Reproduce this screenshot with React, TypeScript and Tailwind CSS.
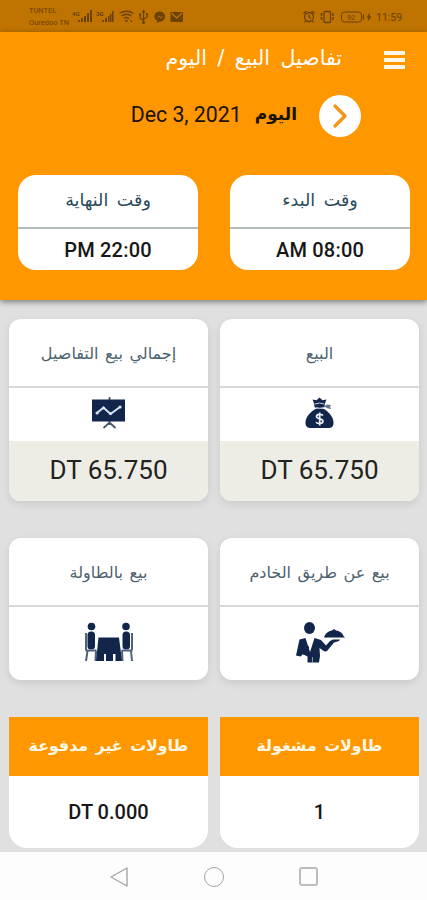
import React from 'react';
import { ChevronRight } from 'lucide-react';

const ARABIC = "font-['DejaVu_Sans',sans-serif]";

function StatusBar() {
  return (
    <div className="flex h-8 shrink-0 items-center bg-[#bf7300] pl-[29px] pr-[25px] text-[#6b4104]">
      <div className="w-[43px] whitespace-nowrap pt-[2px] text-[7.5px] leading-[12.500px]">
        <div>TUNTEL</div>
        <div>Ouredoo TN</div>
      </div>
      <svg width="112" height="16" viewBox="72 8 112 16" fill="currentColor">
        <text x="72" y="16" fontSize="6" fontWeight="700">4G</text>
        <path d="M78 20h2v2h-2zM81 18h2v4h-2zM84 16h2v6h-2zM87 13h2v9h-2zM90 10h2v12h-2z" />
        <text x="96" y="16" fontSize="6" fontWeight="700">3G</text>
        <path d="M102 20h2v2h-2zM105 18h2v4h-2zM108 16h1.5v6h-1.5zM110 14h1.5v8h-1.5zM112 11h1.5v11h-1.5z" />
        <g fill="none" stroke="currentColor" strokeWidth="1.3">
          <path d="M119.5 13.5q7-4.500 14 0M121.500 16q5-3.500 10 0M124 18.500q2.500-2 5 0" />
          <path d="M143.500 11v12M140 15v3l3.500 2.500M147 14v3l-3.500 2.500" />
        </g>
        <circle cx="126.500" cy="21" r="1.200" />
        <path d="M129 19l2 3h2M143.500 9.500l2 3h-4zM139 13.500h2v2h-2zM146 13h2v2h-2z" />
        <circle cx="143.500" cy="22.500" r="1.500" />
        <path d="M160 11.500a5.500 5 0 0 0-3 9.300V23l2-1.300A5.500 5 0 1 0 160 11.500z" />
        <path d="M156.500 18.500l2.700-3 1.700 1.700 2.700-1.700-2.700 3-1.700-1.700z" fill="#bf7300" />
        <rect x="170.500" y="12" width="12.500" height="10" rx="1" />
        <path d="M171.500 13l5.200 5 5.200-5" fill="none" stroke="#bf7300" strokeWidth="1.300" />
      </svg>
      <svg className="ml-auto" width="72" height="16" viewBox="302 8 72 16" fill="none" stroke="currentColor" strokeWidth="1.300">
        <circle cx="309" cy="17" r="4.500" />
        <path d="M309 14.500V17l2 1.500M303.500 13.500l3-2.500M314.500 13.500l-3-2.500M305.500 21l-1 1.500M312.500 21l1 1.500" />
        <rect x="324" y="11.500" width="6.500" height="11" rx="1" />
        <path d="M321.500 13v8M333 13v8" strokeWidth="1.500" strokeDasharray="3 1" />
        <rect x="341.500" y="12" width="20" height="10" rx="3" strokeWidth="1" />
        <path d="M363.500 14.500v5" />
        <path d="M370 12.500l-3.500 5h2l-1 4 4-5h-2z" fill="currentColor" stroke="none" />
        <text x="347" y="19.500" fontSize="7" fill="currentColor" stroke="none">92</text>
      </svg>
      <span className="ml-[2px] w-[26px] whitespace-nowrap pt-[3px] text-[10.500px]">11:59</span>
    </div>
  );
}

function TimeCard({ label, value }: { label: string; value: string }) {
  return (
    <div className="h-[95px] w-[180px] overflow-hidden rounded-[18px] bg-white text-center">
      <div
        dir="rtl"
        className={`${ARABIC} h-[54px] border-b-2 border-[#b3bbbb] text-[17.500px] leading-[50px] text-[#294a5c] [word-spacing:3px]`}
      >
        {label}
      </div>
      <div className="text-[20px] font-medium leading-[42px] tracking-[0.2px] text-[#171717]">{value}</div>
    </div>
  );
}

interface SaleCardProps {
  label: string;
  icon: React.ReactNode;
  value?: string;
}

function SaleCard({ label, icon, value }: SaleCardProps) {
  return (
    <div className="flex flex-col overflow-hidden rounded-xl bg-white text-center shadow-[0_3px_8px_rgba(0,0,0,0.1)]">
      <div
        dir="rtl"
        className={`${ARABIC} h-[69px] shrink-0 border-b-2 border-[#d8d8d8] text-[16px] leading-[70px] text-[#4b626e] [word-spacing:1.500px]`}
      >
        {label}
      </div>
      <div className="flex min-h-0 flex-1 items-center justify-center pb-1">{icon}</div>
      {value && (
        <div className="h-[60px] bg-[#eeede5] text-[26px] leading-[59px] text-[#222220]">{value}</div>
      )}
    </div>
  );
}

function TableCard({ label, value }: { label: string; value: string }) {
  return (
    <div className="overflow-hidden rounded-b-[18px] bg-white text-center">
      <div
        dir="rtl"
        className={`${ARABIC} h-[59px] bg-[#ff9800] text-[15.800px] font-bold leading-[57px] text-[#fff8e6] [word-spacing:2px]`}
      >
        {label}
      </div>
      <div className="text-[20px] font-medium leading-[72px] text-[#171717]">{value}</div>
    </div>
  );
}

const BoardIcon = () => (
  <svg width="34" height="34" viewBox="0 0 34 34" fill="none">
    <path d="M17.500 1v3M17.500 25v4M17.500 26.500l-6 5.500M17.500 26.500l6 5.500" stroke="#48576a" strokeWidth="1.800" />
    <path d="M0 3.500h33v22H0z" fill="#12264c" />
    <path d="M5 17l6.500-5.500L18.500 18 28 11" stroke="#d9e4f2" strokeWidth="2" />
    <path d="M5 17h.1M11.500 12h.1M18.500 17.500h.1M28 11h.1" stroke="#d9e4f2" strokeWidth="3" strokeLinecap="round" />
  </svg>
);

const MoneyBagIcon = () => (
  <svg width="30" height="32" viewBox="0 0 30 32" fill="#12264c">
    <path d="M7.500 2.500l4 .7L14.500.5l3 2.700 4-.7-2 5h-10z" />
    <path d="M9 7.500c3-1.500 8-1.500 11 0l-1 3.500c-3 1-6 1-9 0z" />
    <path d="M10 7q4.500-2 9 0M10.500 10.500q4.500 1.500 8.500 0" fill="none" stroke="#fff" strokeWidth=".8" />
    <path d="M19 9.500l3-2 4 .5-1 2 1.500 2-3.500-.5z" fill="#687792" />
    <path d="M10.500 12h8.500c4 2.500 9 7 9.500 13 .3 4-1.500 6-5.500 6H6c-4 0-5.700-2-5.500-6C1 19 6 14.500 10.500 12z" />
    <path d="M18 18.500c-1-1.500-6.500-2-6.500 1s6.500 1.700 6.500 4.700-6 2.800-7 1M14.700 15.500v13" fill="none" stroke="#e9eef5" strokeWidth="1.700" />
  </svg>
);

const WaiterIcon = () => (
  <svg width="50" height="42" viewBox="0 0 50 42" fill="#12264c">
    <ellipse cx="14.500" cy="7" rx="5.500" ry="6" />
    <path d="M29.500 15c1.500-3.500 4.500-5 7.500-5.500l2-1.500 2 1.500c3.500.5 6.500 2 7.500 5.500l1.500 1.500H29z" />
    <path d="M4.500 18.500l6-1.500L15 31l4.500-14 6.500 2 5 5.500 4-4.500 3-1.500h7L44 20l-5 1.500-6.500 8c-1.200 1.200-3 1.200-4.500 0l-3.500-2.500.5 8-1 6.500H12.500v-6L8 33l-2.500 2.500-4.500-1z" />
    <path d="M6 29l8-4v10l-6-1.500z" />
    <path d="M12.500 17.500l3 10.500 2.500-10.500" fill="#fff" />
    <path d="M17.500 36v5.500" stroke="#fff" strokeWidth=".5" />
  </svg>
);

const TableIcon = () => (
  <svg width="50" height="40" viewBox="0 0 50 40" fill="#12264c">
    <circle cx="7.500" cy="4.500" r="3.800" />
    <circle cx="42" cy="4.500" r="3.800" />
    <rect x="3.500" y="9.500" width="7.500" height="18" rx="3.500" />
    <rect x="38.500" y="9.500" width="7.500" height="18" rx="3.500" />
    <path d="M2 11v17M1.500 28.500h11M3.500 29l-1.500 10M12 29l-.5 10M48 11v17M37.500 28.500h11M47 29l1 10M38 29l.5 10" stroke="#50637a" strokeWidth="2" />
    <path d="M14.500 15.500h20.500L38 39h-6.500v-7h-2.500v7h-7v-7h-2v7H12z" />
  </svg>
);

function NavBar() {
  return (
    <div className="flex h-12 shrink-0 items-center justify-center gap-[75px] bg-[#fdfdfd] pt-px">
      <svg width="20" height="22" viewBox="0 0 20 22" fill="none" stroke="#a5a5a5" strokeWidth="1.400">
        <path d="M18 2v18L2 11z" strokeLinejoin="round" />
      </svg>
      <div className="h-5 w-5 rounded-full border-[1.5px] border-[#a5a5a5]" />
      <div className="h-[19px] w-[19px] rounded-[3px] border-2 border-[#bdbdbd]" />
    </div>
  );
}

export default function App() {
  return (
    <div className="flex h-[900px] w-[427px] flex-col overflow-hidden bg-[#e0e0e0] font-[Roboto,sans-serif]">
      <StatusBar />
      <header className="z-10 h-[268px] shrink-0 bg-[#ff9800] shadow-[0_2px_6px_rgba(0,0,0,0.45)]">
        <div className="flex h-14 items-center justify-end pr-[22px]">
          <h1
            dir="rtl"
            className={`${ARABIC} mb-[3px] mr-[42px] whitespace-nowrap text-[20.500px] text-white [word-spacing:4px]`}
          >
            تفاصيل البيع / اليوم
          </h1>
          <div className="flex w-[21px] flex-col gap-[3px]">
            <span className="h-1 bg-[#fff8e8]" />
            <span className="h-1 bg-[#fff8e8]" />
            <span className="h-1 bg-[#fff8e8]" />
          </div>
        </div>
        <div className="flex h-14 items-center justify-end pr-[66px] text-[#1b1203]">
          <span className="mb-[3px] mr-[13px] whitespace-nowrap text-[21.300px]">Dec 3, 2021</span>
          <span dir="rtl" className={`${ARABIC} mb-[3px] mr-[22px] text-[17px] font-bold`}>اليوم</span>
          <div className="flex h-[42px] w-[42px] items-center justify-center rounded-full bg-white">
            <ChevronRight size={40} strokeWidth={2} className="text-[#f59518]" />
          </div>
        </div>
        <div className="mt-[31px] flex justify-between pl-[18px] pr-[17px]">
          <TimeCard label="وقت النهاية" value="PM 22:00" />
          <TimeCard label="وقت البدء" value="AM 08:00" />
        </div>
      </header>
      <main className="grid flex-1 grid-cols-2 grid-rows-[182px_142px_131px] gap-x-3 gap-y-[37px] pl-[9px] pr-2 pt-[19px]">
        <SaleCard label="إجمالي بيع التفاصيل" icon={<BoardIcon />} value="DT 65.750" />
        <SaleCard label="البيع" icon={<MoneyBagIcon />} value="DT 65.750" />
        <SaleCard label="بيع بالطاولة" icon={<TableIcon />} />
        <SaleCard label="بيع عن طريق الخادم" icon={<WaiterIcon />} />
        <TableCard label="طاولات غير مدفوعة" value="DT 0.000" />
        <TableCard label="طاولات مشغولة" value="1" />
      </main>
      <NavBar />
    </div>
  );
}
